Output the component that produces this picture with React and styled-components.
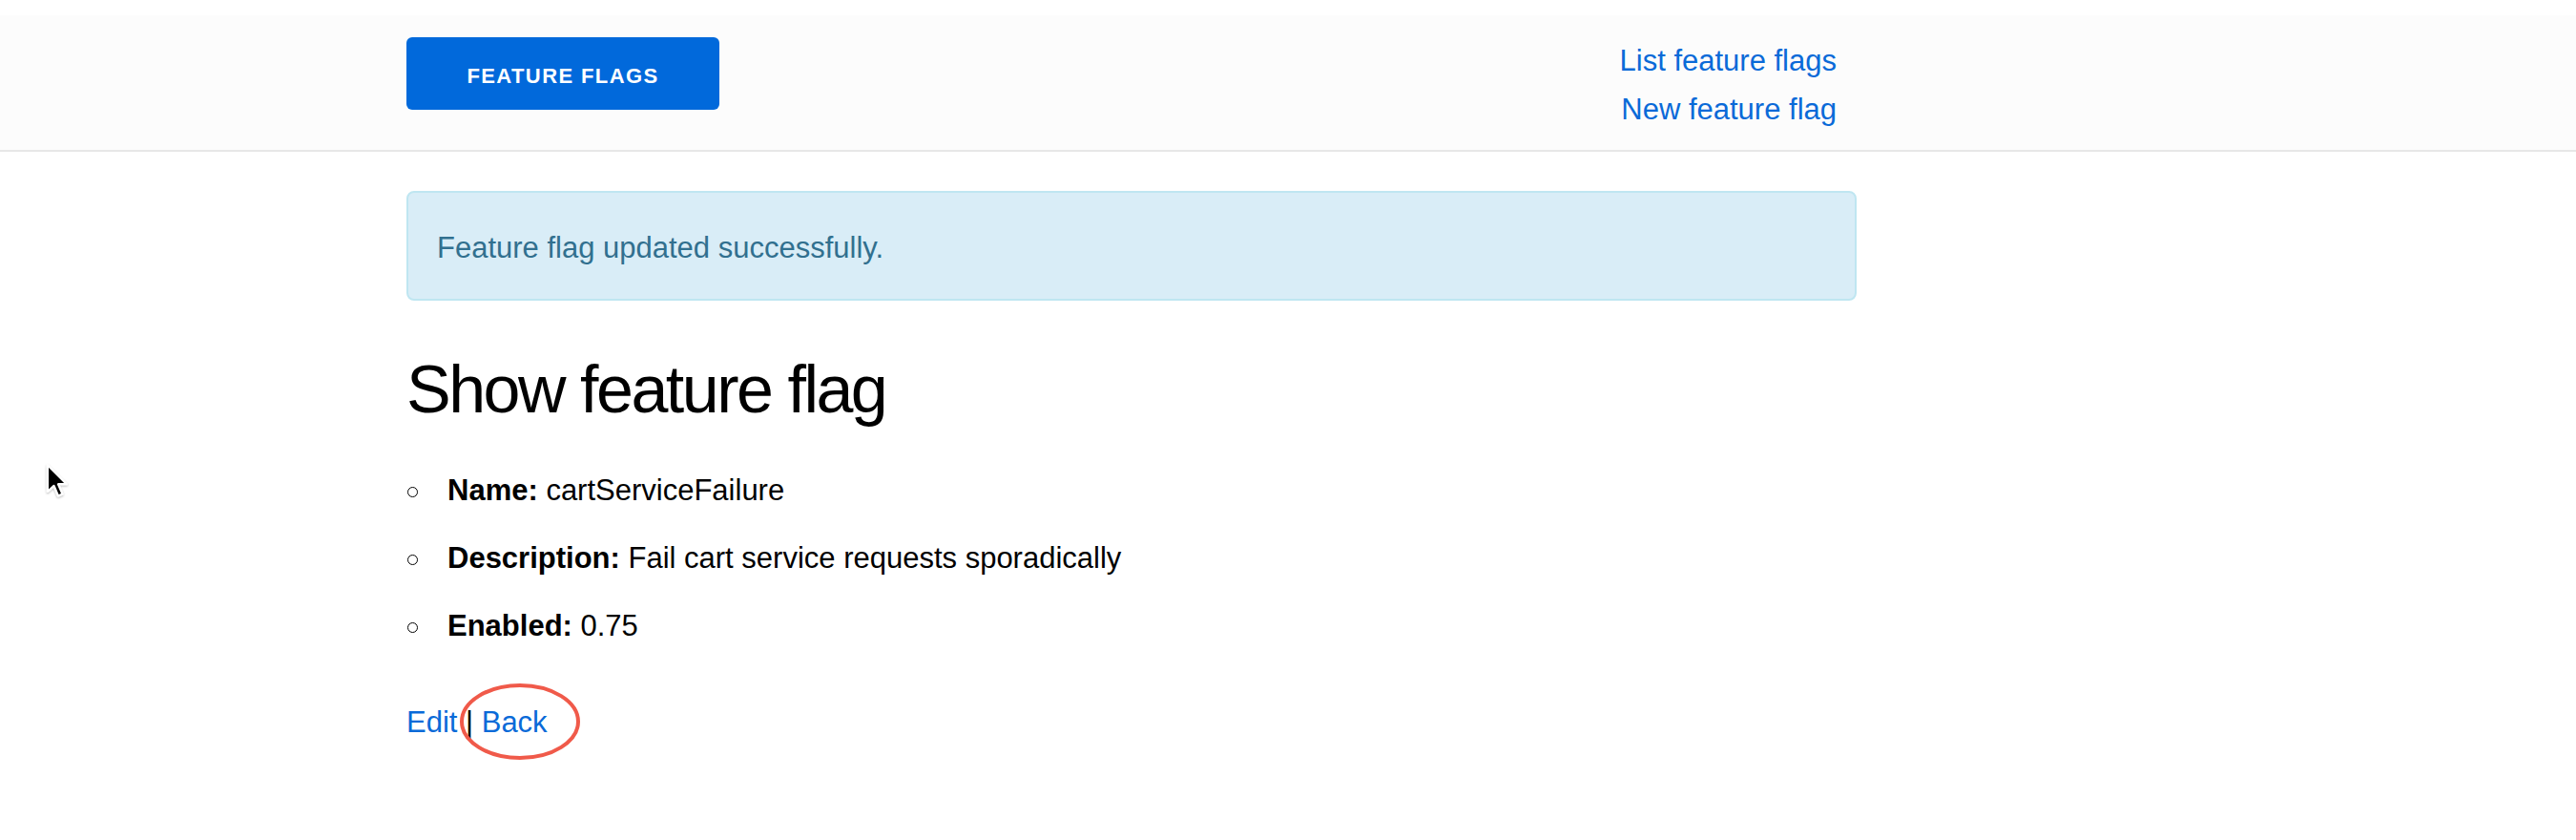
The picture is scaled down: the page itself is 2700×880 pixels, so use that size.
import React from "react";
import styled, { createGlobalStyle } from "styled-components";

const GlobalStyle = createGlobalStyle`
  html, body {
    margin: 0;
    padding: 0;
    background: #ffffff;
  }
  body {
    font-family: "Liberation Sans", Arial, Helvetica, sans-serif;
    color: #000;
  }
  * { box-sizing: border-box; }
`;

const Page = styled.div`
  position: relative;
  min-height: 880px;
  padding-top: 16px;
`;

const Header = styled.header`
  background: #fcfcfc;
  border-bottom: 2px solid #e7e7e7;
  padding: 22px 0 17px;
`;

const Container = styled.div`
  margin-left: 426px;
  width: 1520px;
`;

const HeaderInner = styled(Container)`
  display: flex;
  justify-content: space-between;
  align-items: flex-start;
`;

const BrandButton = styled.a`
  display: inline-flex;
  align-items: center;
  justify-content: center;
  width: 328px;
  height: 76px;
  margin-top: 1px;
  padding-top: 6px;
  background: #0169db;
  border-radius: 6px;
  color: #fff;
  font-size: 22px;
  font-weight: 700;
  letter-spacing: 1.4px;
  text-transform: uppercase;
  text-decoration: none;
`;

const Nav = styled.nav`
  display: flex;
  flex-direction: column;
  align-items: flex-end;
  padding-right: 21px;
`;

const NavLink = styled.a`
  display: block;
  font-size: 31px;
  line-height: 51px;
  color: #0a6ad8;
  text-decoration: none;
`;

const Main = styled(Container)`
  padding-top: 41px;
`;

const Alert = styled.div`
  background: #d9edf7;
  border: 2px solid #bfe6f1;
  border-radius: 8px;
  padding: 32px 30px 28px;
  color: #31708f;
  font-size: 31px;
  line-height: 51px;
  margin-bottom: 55px;
`;

const Title = styled.h1`
  margin: 0;
  font-size: 70px;
  line-height: 77px;
  font-weight: 400;
  letter-spacing: -2.5px;
  color: #000;
`;

const Details = styled.ul`
  list-style: none;
  margin: 41px 0 0;
  padding: 0;
`;

const Detail = styled.li`
  font-size: 31px;
  line-height: 51px;
  padding-left: 41px;
  margin-bottom: 20px;

  &::before {
    content: "";
    display: inline-block;
    width: 9px;
    height: 9px;
    border: 1.6px solid #000;
    border-radius: 50%;
    vertical-align: middle;
    margin-left: -40px;
    margin-right: 31px;
  }
`;

const Label = styled.strong`
  font-weight: 700;
`;

const Actions = styled.p`
  position: relative;
  margin: 50px 0 0;
  font-size: 31px;
  line-height: 51px;
`;

const ActionLink = styled.a`
  color: #0a6ad8;
  text-decoration: none;
`;

const Highlight = styled.svg`
  position: absolute;
  left: 55px;
  top: -16px;
  pointer-events: none;
`;

const Cursor = styled.svg`
  position: absolute;
  left: 46px;
  top: 485px;
`;

export default function App() {
  return (
    <>
      <GlobalStyle />
      <Page>
        <Header>
          <HeaderInner>
            <BrandButton href="#">Feature Flags</BrandButton>
            <Nav>
              <NavLink href="#">List feature flags</NavLink>
              <NavLink href="#">New feature flag</NavLink>
            </Nav>
          </HeaderInner>
        </Header>
        <Main>
          <Alert>Feature flag updated successfully.</Alert>
          <Title>Show feature flag</Title>
          <Details>
            <Detail>
              <Label>Name:</Label> cartServiceFailure
            </Detail>
            <Detail>
              <Label>Description:</Label> Fail cart service requests sporadically
            </Detail>
            <Detail>
              <Label>Enabled:</Label> 0.75
            </Detail>
          </Details>
          <Actions>
            <ActionLink href="#">Edit</ActionLink> | <ActionLink href="#">Back</ActionLink>
            <Highlight width="128" height="82" viewBox="0 0 128 82">
              <ellipse cx="64" cy="41" rx="61" ry="38" fill="none" stroke="#f05a4a" strokeWidth="4" />
            </Highlight>
          </Actions>
        </Main>
        <Cursor width="30" height="40" viewBox="0 0 26 36">
          <defs>
            <filter id="sh" x="-30%" y="-30%" width="160%" height="160%">
              <feDropShadow dx="0" dy="1" stdDeviation="1" floodColor="#000" floodOpacity="0.3" />
            </filter>
          </defs>
          <path
            d="M3 2 L3 27 L9 21.5 L13 31 L17 29.3 L13 20 L21 20 Z"
            fill="#000"
            stroke="#fff"
            strokeWidth="2"
            strokeLinejoin="round"
            filter="url(#sh)"
          />
        </Cursor>
      </Page>
    </>
  );
}
